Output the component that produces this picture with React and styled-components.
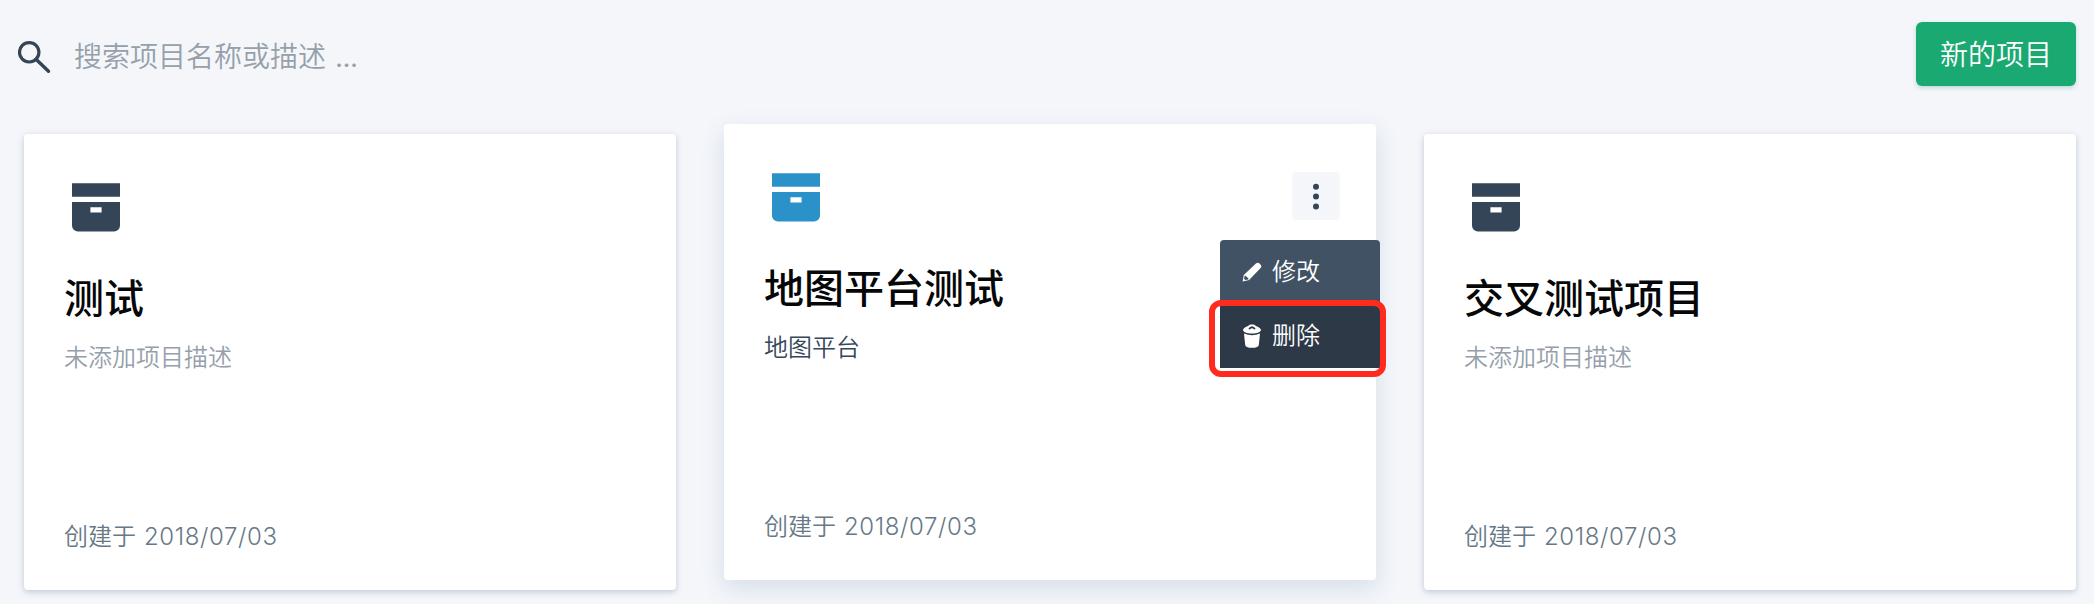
import React from "react";
import styled, { createGlobalStyle } from "styled-components";

const GlobalStyle = createGlobalStyle`
  * { box-sizing: border-box; }
  body {
    margin: 0;
    background: #f4f6fa;
    font-family: "Noto Sans CJK SC", "Noto Sans", sans-serif;
    overflow: hidden;
  }
`;

const Page = styled.main`
  height: 604px;
  overflow: hidden;
  padding: 22px 18px 0;
`;

const Toolbar = styled.header`
  display: flex;
  justify-content: space-between;
  height: 64px;
  margin-bottom: 48px;
`;

const SearchField = styled.label`
  display: flex;
  align-items: center;
  gap: 23px;
  height: 70px;
  color: #95a0aa;
  font-size: 28px;
  line-height: 40px;
  white-space: pre;
`;

const SearchText = styled.span`
  padding-bottom: 4px;
  font-weight: 350;
  word-spacing: 3px;
`;

const PrimaryButton = styled.button`
  height: 64px;
  padding: 0 24px 2px;
  border: 0;
  border-radius: 6px;
  background: #1ba972;
  box-shadow: 0 2px 4px rgba(27, 130, 100, 0.25);
  color: #fff;
  font-family: inherit;
  font-size: 28px;
  font-weight: 350;
  line-height: 40px;
`;

const Grid = styled.section`
  display: grid;
  grid-template-columns: repeat(3, 652px);
  gap: 48px;
  padding-left: 6px;
`;

const Card = styled.article`
  position: relative;
  display: flex;
  flex-direction: column;
  height: 456px;
  padding: 49px 40px 34px;
  border-radius: 4px;
  background: #fff;
  transform: ${(p) => (p.$raised ? "translateY(-10px)" : "none")};
  box-shadow: ${(p) =>
    p.$raised
      ? "0 8px 24px rgba(50, 80, 120, 0.15)"
      : "0 2px 6px rgba(50, 80, 110, 0.27)"};
`;

const CardTop = styled.div`
  display: flex;
  justify-content: space-between;
  height: 49px;
  padding-left: 8px;
  color: ${(p) => (p.$active ? "#2b91c9" : "#344557")};
`;

const MoreButton = styled.button`
  display: grid;
  place-items: center;
  width: 48px;
  height: 48px;
  margin: -1px -4px 0 0;
  padding: 0;
  border: 0;
  border-radius: 4px;
  background: #f4f6fa;
  color: #344557;
`;

const Title = styled.h2`
  margin: 36px 0 0;
  color: #050709;
  font-size: 40px;
  font-weight: 500;
  line-height: 56px;
`;

const Description = styled.p`
  margin: 15px 0 0;
  color: ${(p) => (p.$empty ? "#95a0ab" : "#35475a")};
  font-size: 24px;
  font-weight: 350;
  line-height: 34px;
`;

const Created = styled.footer`
  display: flex;
  gap: 8px;
  margin-top: auto;
  color: #677987;
  font-size: 24px;
  font-weight: 350;
  line-height: 32px;
  padding-bottom: 3px;
`;

const DateText = styled.time`
  padding-top: 2px;
  font-family: Inter, sans-serif;
  font-weight: 350;
  letter-spacing: 0.6px;
`;

const Menu = styled.div`
  position: absolute;
  top: 116px;
  right: -4px;
  width: 160px;
`;

const MenuItem = styled.div`
  display: flex;
  align-items: center;
  gap: 10px;
  height: 64px;
  padding: 0 0 1px 22px;
  border-radius: ${(p) => (p.$selected ? "0" : "4px 4px 0 0")};
  background: ${(p) => (p.$selected ? "#2d3947" : "#405263")};
  color: #fff;
  font-size: 24px;
  font-weight: 350;
  line-height: 34px;
`;

const MenuLabel = styled.span`
  padding-bottom: 3px;
`;

const Highlight = styled.div`
  position: absolute;
  top: 60px;
  left: -11px;
  width: 177px;
  height: 77px;
  border: 6px solid #ff2b1c;
  border-radius: 12px;
`;

function SearchIcon() {
  return (
    <svg width="33" height="34" viewBox="0 0 33 34" fill="none" stroke="#344557">
      <circle cx="11.2" cy="12.3" r="9.7" strokeWidth="3.2" />
      <path d="M18 19.2 30.5 31.2" strokeWidth="3.4" strokeLinecap="round" />
    </svg>
  );
}

function ArchiveIcon() {
  return (
    <svg width="48" height="49" viewBox="0 0 48 49" fill="currentColor">
      <path d="M0 .2h48v13.6H0z" />
      <path
        fillRule="evenodd"
        d="M0 19h48v23.5a6 6 0 0 1-6 6H6a6 6 0 0 1-6-6zM18.4 24.2v5.4h11.2v-5.4z"
      />
    </svg>
  );
}

function DotsIcon() {
  return (
    <svg width="8" height="28" viewBox="0 0 8 28" fill="currentColor">
      <circle cx="4" cy="4.7" r="3" />
      <circle cx="4" cy="14.5" r="3" />
      <circle cx="4" cy="24.5" r="3" />
    </svg>
  );
}

function PencilIcon() {
  return (
    <svg width="20" height="20" viewBox="0 0 20 20" fill="#fff">
      <path
        fillRule="evenodd"
        d="M.6 19.4 1.8 12.9 13.9 1.6Q16 .1 17.5 1.6L18.8 3Q20.2 4.5 18.4 6.2L7.1 18zM2.7 13.9 2 16.7l1.4 1.4 2.9-.7q.5-1.4-.8-2-1.3-.3-1.3-1.5-.7-.5-1.5 0z"
      />
    </svg>
  );
}

function TrashIcon() {
  return (
    <svg width="20" height="24" viewBox="0 0 20 24" fill="#fff">
      <path
        fillRule="evenodd"
        d="M1 5.7C2 3.5 4.5 2.4 6.3 2 7.3.1 12.7.1 13.7 2c1.8.4 4.3 1.5 5.3 3.7 0 2.2-4 3.8-9 3.8S1 7.9 1 5.7zM6.3 4.9l1.7.5q2-2.4 4 0l1.7-.5Q12.5 2.2 10 2.2T6.3 4.9z"
      />
      <path d="M2 9.6q8 3.5 16 0l-1.2 11.3Q16.5 23.7 10 23.7t-6.8-2.8z" />
    </svg>
  );
}

const projects = [
  { name: "测试", date: "2018/07/03" },
  { name: "地图平台测试", description: "地图平台", date: "2018/07/03", active: true },
  { name: "交叉测试项目", date: "2018/07/03" },
];

function ActionMenu() {
  return (
    <Menu>
      <MenuItem>
        <PencilIcon />
        <MenuLabel>修改</MenuLabel>
      </MenuItem>
      <MenuItem $selected>
        <TrashIcon />
        <MenuLabel>删除</MenuLabel>
      </MenuItem>
      <Highlight />
    </Menu>
  );
}

function ProjectCard({ name, description, date, active }) {
  return (
    <Card $raised={active}>
      <CardTop $active={active}>
        <ArchiveIcon />
        {active && (
          <MoreButton aria-label="更多">
            <DotsIcon />
          </MoreButton>
        )}
      </CardTop>
      <Title>{name}</Title>
      <Description $empty={!description}>{description || "未添加项目描述"}</Description>
      <Created>
        创建于 <DateText>{date}</DateText>
      </Created>
      {active && <ActionMenu />}
    </Card>
  );
}

export default function App() {
  return (
    <>
      <GlobalStyle />
      <Page>
        <Toolbar>
          <SearchField>
            <SearchIcon />
            <SearchText>搜索项目名称或描述 ...</SearchText>
          </SearchField>
          <PrimaryButton>新的项目</PrimaryButton>
        </Toolbar>
        <Grid>
          {projects.map((project) => (
            <ProjectCard key={project.name} {...project} />
          ))}
        </Grid>
      </Page>
    </>
  );
}
